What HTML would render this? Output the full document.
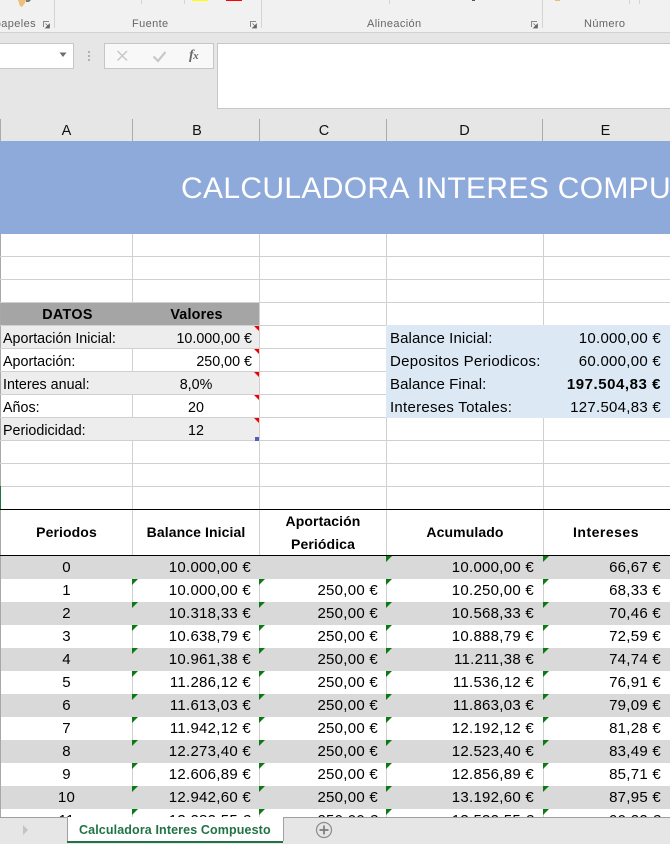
<!DOCTYPE html>
<html lang="es"><head><meta charset="utf-8"><title>Calculadora Interes Compuesto</title>
<style>
html,body{margin:0;padding:0;width:670px;height:844px;overflow:hidden;background:#fff}
body{position:relative;font-family:"Liberation Sans",sans-serif;color:#000}
.a{position:absolute}
.t{position:absolute;white-space:nowrap;font-size:15px;letter-spacing:.27px;line-height:23px;height:23px}
.r{text-align:right}
.c{text-align:center}
.lbl{position:absolute;top:17px;font-size:11px;letter-spacing:.38px;line-height:14px;color:#666;white-space:nowrap}
.sep{position:absolute;top:0;width:1px;background:#d4d4d4}
.col{position:absolute;top:119px;height:22px;width:1px;background:#ababab}
.hd{position:absolute;top:120px;height:22px;line-height:22px;font-size:14.5px;text-align:center;color:#111}
.gl{position:absolute;background:#d0d0d0}
.d{font-size:14.3px;letter-spacing:0;line-height:23px}
.g{position:absolute;width:0;height:0;border-top:6px solid #0a7a12;border-right:6px solid transparent}
.rd{position:absolute;width:0;height:0;border-top:5px solid #f00000;border-left:5px solid transparent}
.b{font-weight:700}
.hb{font-size:14px;letter-spacing:.1px}
</style></head><body>

<!-- ribbon -->
<div class="a" style="left:0;top:0;width:670px;height:32px;background:#f1f1f1"></div>
<div class="a" style="left:0;top:32px;width:670px;height:1px;background:#d2d2d2"></div>
<svg class="a" style="left:15px;top:0" width="20" height="8"><path d="M3 0h8l-1 3-3 4-2-1z" fill="#eebf7c"/><path d="M11 0h5l-2 2h-3z" fill="#777"/></svg>
<div class="sep" style="left:54px;height:28px"></div>
<div class="sep" style="left:141px;height:4px"></div>
<div class="sep" style="left:184px;height:4px"></div>
<div class="sep" style="left:261px;height:28px"></div>
<div class="sep" style="left:389px;height:4px"></div>
<div class="sep" style="left:542px;height:28px"></div>
<div class="sep" style="left:629px;height:4px"></div>
<div class="sep" style="left:639px;height:4px"></div>
<div class="a" style="left:192px;top:0;width:16px;height:1px;background:#ff0"></div>
<div class="a" style="left:226px;top:0;width:16px;height:1px;background:#f00"></div>
<div class="a" style="left:555px;top:0;width:5px;height:1px;background:#f0bc70"></div>
<div class="a" style="left:472px;top:0;width:3px;height:1px;background:#555"></div>
<div class="a" style="left:0;top:17px;width:36px;height:14px;overflow:hidden"><span class="lbl" style="top:0;left:auto;right:0">Portapapeles</span></div>
<div class="lbl" style="left:132px">Fuente</div>
<div class="lbl" style="left:367px">Alineación</div>
<div class="lbl" style="left:584px">Número</div>
<svg class="a" style="left:43px;top:21px" width="8" height="8"><path d="M.5 6V.5H6" fill="none" stroke="#888"/><path d="M2.5 2.5l3 3M6.5 3v4h-4z" fill="#666" stroke="#666" stroke-width=".7"/></svg>
<svg class="a" style="left:250px;top:21px" width="8" height="8"><path d="M.5 6V.5H6" fill="none" stroke="#888"/><path d="M2.5 2.5l3 3M6.5 3v4h-4z" fill="#666" stroke="#666" stroke-width=".7"/></svg>
<svg class="a" style="left:531px;top:21px" width="8" height="8"><path d="M.5 6V.5H6" fill="none" stroke="#888"/><path d="M2.5 2.5l3 3M6.5 3v4h-4z" fill="#666" stroke="#666" stroke-width=".7"/></svg>

<!-- formula bar -->
<div class="a" style="left:0;top:33px;width:670px;height:86px;background:#e6e6e6"></div>
<div class="a" style="left:-2px;top:43px;width:74px;height:24px;background:#fff;border:1px solid #c6c6c6"></div>
<svg class="a" style="left:59px;top:52px" width="10" height="6"><path d="M.5 .5h7L4 5z" fill="#6d6d6d"/></svg>
<div class="a" style="left:88px;top:51px;width:2px;height:2px;background:#b1b1b1"></div>
<div class="a" style="left:88px;top:55px;width:2px;height:2px;background:#b1b1b1"></div>
<div class="a" style="left:88px;top:59px;width:2px;height:2px;background:#b1b1b1"></div>
<div class="a" style="left:104px;top:43px;width:108px;height:24px;background:#f8f8f8;border:1px solid #c6c6c6"></div>
<svg class="a" style="left:116px;top:50px" width="14" height="12"><path d="M1.500 1l9.500 9.500M11 1L1.500 10.500" fill="none" stroke="#c8c8c8" stroke-width="1.500"/></svg>
<svg class="a" style="left:152px;top:50px" width="16" height="13"><path d="M1.500 6.500l4.500 4.500L13.500 2" fill="none" stroke="#c8c8c8" stroke-width="2.200"/></svg>
<div class="a" style="left:189px;top:47px;font:italic 700 14px/17px 'Liberation Serif',serif;color:#6a6a6a;letter-spacing:-.5px">f<span style="font-size:11px">x</span></div>
<div class="a" style="left:217px;top:43px;width:460px;height:64px;background:#fff;border:1px solid #c6c6c6"></div>

<!-- column headers -->
<div class="a" style="left:0;top:119px;width:670px;height:22px;background:#e6e6e6"></div>
<div class="col" style="left:0"></div><div class="col" style="left:132px"></div><div class="col" style="left:259px"></div><div class="col" style="left:386px"></div><div class="col" style="left:542px"></div>
<div class="hd" style="left:1px;width:131px">A</div>
<div class="hd" style="left:134px;width:126px">B</div>
<div class="hd" style="left:261px;width:126px">C</div>
<div class="hd" style="left:387px;width:155px">D</div>
<div class="hd" style="left:542px;width:127px">E</div>

<!-- title -->
<div class="a" style="left:0;top:141px;width:670px;height:93px;background:#8eaadb;overflow:hidden"><div class="a" style="left:181px;top:28px;color:#fff;font-size:30px;line-height:40px;letter-spacing:.33px;white-space:nowrap">CALCULADORA INTERES COMPUESTO</div></div>

<!-- gridlines -->
<div class="gl" style="left:0;top:234px;width:1px;height:322px;background:#a8a8a8"></div>
<div class="gl" style="left:132px;top:234px;width:1px;height:275px"></div>
<div class="gl" style="left:259px;top:234px;width:1px;height:275px"></div>
<div class="gl" style="left:386px;top:234px;width:1px;height:275px"></div>
<div class="gl" style="left:543px;top:234px;width:1px;height:275px"></div>
<div class="gl" style="left:0;top:256px;width:670px;height:1px"></div>
<div class="gl" style="left:0;top:279px;width:670px;height:1px"></div>
<div class="gl" style="left:0;top:302px;width:670px;height:1px"></div>
<div class="gl" style="left:259px;top:325px;width:411px;height:1px"></div>
<div class="gl" style="left:259px;top:348px;width:127px;height:1px"></div>
<div class="gl" style="left:259px;top:371px;width:127px;height:1px"></div>
<div class="gl" style="left:259px;top:394px;width:127px;height:1px"></div>
<div class="gl" style="left:0;top:417px;width:670px;height:1px"></div>
<div class="gl" style="left:0;top:440px;width:670px;height:1px"></div>
<div class="gl" style="left:0;top:463px;width:670px;height:1px"></div>
<div class="gl" style="left:0;top:486px;width:670px;height:1px"></div>
<div class="a" style="left:0;top:486px;width:1px;height:23px;background:#217346"></div>

<!-- datos -->
<div class="a" style="left:1px;top:303px;width:258px;height:23px;background:#a5a5a5"></div>
<div class="a" style="left:1px;top:326px;width:258px;height:22px;background:#ededed"></div>
<div class="a" style="left:1px;top:349px;width:258px;height:22px;background:#fff"></div>
<div class="a" style="left:1px;top:372px;width:258px;height:22px;background:#ededed"></div>
<div class="a" style="left:1px;top:395px;width:258px;height:22px;background:#fff"></div>
<div class="a" style="left:1px;top:418px;width:258px;height:22px;background:#ededed"></div>
<div class="gl" style="left:0;top:325px;width:259px;height:1px;background:#d0d0d0"></div>
<div class="gl" style="left:0;top:348px;width:259px;height:1px"></div>
<div class="gl" style="left:0;top:371px;width:259px;height:1px"></div>
<div class="gl" style="left:0;top:394px;width:259px;height:1px"></div>
<div class="gl" style="left:132px;top:349px;width:1px;height:22px"></div>
<div class="gl" style="left:132px;top:395px;width:1px;height:22px"></div>
<div class="t d b c" style="left:1px;top:304px;width:133px;letter-spacing:.35px">DATOS</div>
<div class="t d b c" style="left:133px;top:304px;width:127px;letter-spacing:.2px">Valores</div>
<div class="t d" style="left:3px;top:328px">Aportación Inicial:</div>
<div class="t d" style="left:3px;top:351px">Aportación:</div>
<div class="t d" style="left:3px;top:374px">Interes anual:</div>
<div class="t d" style="left:3px;top:397px">Años:</div>
<div class="t d" style="left:3px;top:420px">Periodicidad:</div>
<div class="t d r" style="left:133px;top:328px;width:119px">10.000,00 €</div>
<div class="t d r" style="left:133px;top:351px;width:119px">250,00 €</div>
<div class="t d c" style="left:133px;top:374px;width:126px">8,0%</div>
<div class="t d c" style="left:133px;top:397px;width:126px">20</div>
<div class="t d c" style="left:133px;top:420px;width:126px">12</div>
<div class="rd" style="left:254px;top:326px"></div>
<div class="rd" style="left:254px;top:349px"></div>
<div class="rd" style="left:254px;top:372px"></div>
<div class="rd" style="left:254px;top:395px"></div>
<div class="rd" style="left:254px;top:418px"></div>
<div class="a" style="left:255px;top:437px;width:4px;height:4px;background:#4f5fc0"></div>

<!-- resumen -->
<div class="a" style="left:386px;top:325px;width:284px;height:93px;background:#dce9f5"></div>
<div class="t" style="left:390px;top:327px;letter-spacing:.1px">Balance Inicial:</div>
<div class="t" style="left:390px;top:350px">Depositos Periodicos:</div>
<div class="t" style="left:390px;top:373px;letter-spacing:.1px">Balance Final:</div>
<div class="t" style="left:390px;top:396px">Intereses Totales:</div>
<div class="t r" style="left:543px;top:327px;width:118px">10.000,00 €</div>
<div class="t r" style="left:543px;top:350px;width:118px">60.000,00 €</div>
<div class="t r b" style="left:543px;top:373px;width:118px;letter-spacing:.55px">197.504,83 €</div>
<div class="t r" style="left:543px;top:396px;width:118px">127.504,83 €</div>

<!-- cabecera tabla -->
<div class="a" style="left:0;top:509px;width:670px;height:1px;background:#000"></div>
<div class="a" style="left:0;top:555px;width:670px;height:1px;background:#000"></div>
<div class="gl" style="left:132px;top:510px;width:1px;height:45px"></div>
<div class="gl" style="left:259px;top:510px;width:1px;height:45px"></div>
<div class="gl" style="left:386px;top:510px;width:1px;height:45px"></div>
<div class="gl" style="left:543px;top:510px;width:1px;height:45px"></div>
<div class="t hb b c" style="left:1px;top:521px;width:131px">Periodos</div>
<div class="t hb b c" style="left:133px;top:521px;width:126px">Balance Inicial</div>
<div class="t hb b c" style="left:260px;top:510px;width:126px">Aportación</div>
<div class="t hb b c" style="left:260px;top:533px;width:126px">Periódica</div>
<div class="t hb b c" style="left:387px;top:521px;width:156px">Acumulado</div>
<div class="t hb b c" style="left:543px;top:521px;width:126px;letter-spacing:.5px">Intereses</div>

<!-- bandas -->
<div class="a" style="left:1px;top:556px;width:669px;height:23px;background:#d9d9d9"></div>
<div class="a" style="left:1px;top:602px;width:669px;height:23px;background:#d9d9d9"></div>
<div class="a" style="left:1px;top:648px;width:669px;height:23px;background:#d9d9d9"></div>
<div class="a" style="left:1px;top:694px;width:669px;height:23px;background:#d9d9d9"></div>
<div class="a" style="left:1px;top:740px;width:669px;height:23px;background:#d9d9d9"></div>
<div class="a" style="left:1px;top:786px;width:669px;height:23px;background:#d9d9d9"></div>
<div class="a" style="left:0;top:556px;width:1px;height:261px;background:#a8a8a8"></div>
<!-- lineas verticales filas blancas -->
<div class="gl" style="left:132px;top:579px;width:1px;height:23px"></div><div class="gl" style="left:259px;top:579px;width:1px;height:23px"></div><div class="gl" style="left:386px;top:579px;width:1px;height:23px"></div><div class="gl" style="left:543px;top:579px;width:1px;height:23px"></div>
<div class="gl" style="left:132px;top:625px;width:1px;height:23px"></div><div class="gl" style="left:259px;top:625px;width:1px;height:23px"></div><div class="gl" style="left:386px;top:625px;width:1px;height:23px"></div><div class="gl" style="left:543px;top:625px;width:1px;height:23px"></div>
<div class="gl" style="left:132px;top:671px;width:1px;height:23px"></div><div class="gl" style="left:259px;top:671px;width:1px;height:23px"></div><div class="gl" style="left:386px;top:671px;width:1px;height:23px"></div><div class="gl" style="left:543px;top:671px;width:1px;height:23px"></div>
<div class="gl" style="left:132px;top:717px;width:1px;height:23px"></div><div class="gl" style="left:259px;top:717px;width:1px;height:23px"></div><div class="gl" style="left:386px;top:717px;width:1px;height:23px"></div><div class="gl" style="left:543px;top:717px;width:1px;height:23px"></div>
<div class="gl" style="left:132px;top:763px;width:1px;height:23px"></div><div class="gl" style="left:259px;top:763px;width:1px;height:23px"></div><div class="gl" style="left:386px;top:763px;width:1px;height:23px"></div><div class="gl" style="left:543px;top:763px;width:1px;height:23px"></div>
<div class="gl" style="left:132px;top:809px;width:1px;height:8px"></div><div class="gl" style="left:259px;top:809px;width:1px;height:8px"></div><div class="gl" style="left:386px;top:809px;width:1px;height:8px"></div><div class="gl" style="left:543px;top:809px;width:1px;height:8px"></div>

<!-- datos tabla -->
<div class="a" style="left:0;top:556px;width:670px;height:261px;overflow:hidden">
<div class="g" style="left:386px;top:0"></div><div class="g" style="left:543px;top:0"></div>
<div class="t c" style="left:1px;top:0;width:131px">0</div><div class="t r" style="left:133px;top:0;width:118px">10.000,00 €</div><div class="t r" style="left:387px;top:0;width:147px">10.000,00 €</div><div class="t r" style="left:544px;top:0;width:117px">66,67 €</div>

<div class="g" style="left:132px;top:23px"></div><div class="g" style="left:259px;top:23px"></div><div class="g" style="left:386px;top:23px"></div><div class="g" style="left:543px;top:23px"></div>
<div class="t c" style="left:1px;top:23px;width:131px">1</div><div class="t r" style="left:133px;top:23px;width:118px">10.000,00 €</div><div class="t r" style="left:260px;top:23px;width:118px">250,00 €</div><div class="t r" style="left:387px;top:23px;width:147px">10.250,00 €</div><div class="t r" style="left:544px;top:23px;width:117px">68,33 €</div>

<div class="g" style="left:132px;top:46px"></div><div class="g" style="left:259px;top:46px"></div><div class="g" style="left:386px;top:46px"></div><div class="g" style="left:543px;top:46px"></div>
<div class="t c" style="left:1px;top:46px;width:131px">2</div><div class="t r" style="left:133px;top:46px;width:118px">10.318,33 €</div><div class="t r" style="left:260px;top:46px;width:118px">250,00 €</div><div class="t r" style="left:387px;top:46px;width:147px">10.568,33 €</div><div class="t r" style="left:544px;top:46px;width:117px">70,46 €</div>

<div class="g" style="left:132px;top:69px"></div><div class="g" style="left:259px;top:69px"></div><div class="g" style="left:386px;top:69px"></div><div class="g" style="left:543px;top:69px"></div>
<div class="t c" style="left:1px;top:69px;width:131px">3</div><div class="t r" style="left:133px;top:69px;width:118px">10.638,79 €</div><div class="t r" style="left:260px;top:69px;width:118px">250,00 €</div><div class="t r" style="left:387px;top:69px;width:147px">10.888,79 €</div><div class="t r" style="left:544px;top:69px;width:117px">72,59 €</div>

<div class="g" style="left:132px;top:92px"></div><div class="g" style="left:259px;top:92px"></div><div class="g" style="left:386px;top:92px"></div><div class="g" style="left:543px;top:92px"></div>
<div class="t c" style="left:1px;top:92px;width:131px">4</div><div class="t r" style="left:133px;top:92px;width:118px">10.961,38 €</div><div class="t r" style="left:260px;top:92px;width:118px">250,00 €</div><div class="t r" style="left:387px;top:92px;width:147px">11.211,38 €</div><div class="t r" style="left:544px;top:92px;width:117px">74,74 €</div>

<div class="g" style="left:132px;top:115px"></div><div class="g" style="left:259px;top:115px"></div><div class="g" style="left:386px;top:115px"></div><div class="g" style="left:543px;top:115px"></div>
<div class="t c" style="left:1px;top:115px;width:131px">5</div><div class="t r" style="left:133px;top:115px;width:118px">11.286,12 €</div><div class="t r" style="left:260px;top:115px;width:118px">250,00 €</div><div class="t r" style="left:387px;top:115px;width:147px">11.536,12 €</div><div class="t r" style="left:544px;top:115px;width:117px">76,91 €</div>

<div class="g" style="left:132px;top:138px"></div><div class="g" style="left:259px;top:138px"></div><div class="g" style="left:386px;top:138px"></div><div class="g" style="left:543px;top:138px"></div>
<div class="t c" style="left:1px;top:138px;width:131px">6</div><div class="t r" style="left:133px;top:138px;width:118px">11.613,03 €</div><div class="t r" style="left:260px;top:138px;width:118px">250,00 €</div><div class="t r" style="left:387px;top:138px;width:147px">11.863,03 €</div><div class="t r" style="left:544px;top:138px;width:117px">79,09 €</div>

<div class="g" style="left:132px;top:161px"></div><div class="g" style="left:259px;top:161px"></div><div class="g" style="left:386px;top:161px"></div><div class="g" style="left:543px;top:161px"></div>
<div class="t c" style="left:1px;top:161px;width:131px">7</div><div class="t r" style="left:133px;top:161px;width:118px">11.942,12 €</div><div class="t r" style="left:260px;top:161px;width:118px">250,00 €</div><div class="t r" style="left:387px;top:161px;width:147px">12.192,12 €</div><div class="t r" style="left:544px;top:161px;width:117px">81,28 €</div>

<div class="g" style="left:132px;top:184px"></div><div class="g" style="left:259px;top:184px"></div><div class="g" style="left:386px;top:184px"></div><div class="g" style="left:543px;top:184px"></div>
<div class="t c" style="left:1px;top:184px;width:131px">8</div><div class="t r" style="left:133px;top:184px;width:118px">12.273,40 €</div><div class="t r" style="left:260px;top:184px;width:118px">250,00 €</div><div class="t r" style="left:387px;top:184px;width:147px">12.523,40 €</div><div class="t r" style="left:544px;top:184px;width:117px">83,49 €</div>

<div class="g" style="left:132px;top:207px"></div><div class="g" style="left:259px;top:207px"></div><div class="g" style="left:386px;top:207px"></div><div class="g" style="left:543px;top:207px"></div>
<div class="t c" style="left:1px;top:207px;width:131px">9</div><div class="t r" style="left:133px;top:207px;width:118px">12.606,89 €</div><div class="t r" style="left:260px;top:207px;width:118px">250,00 €</div><div class="t r" style="left:387px;top:207px;width:147px">12.856,89 €</div><div class="t r" style="left:544px;top:207px;width:117px">85,71 €</div>

<div class="g" style="left:132px;top:230px"></div><div class="g" style="left:259px;top:230px"></div><div class="g" style="left:386px;top:230px"></div><div class="g" style="left:543px;top:230px"></div>
<div class="t c" style="left:1px;top:230px;width:131px">10</div><div class="t r" style="left:133px;top:230px;width:118px">12.942,60 €</div><div class="t r" style="left:260px;top:230px;width:118px">250,00 €</div><div class="t r" style="left:387px;top:230px;width:147px">13.192,60 €</div><div class="t r" style="left:544px;top:230px;width:117px">87,95 €</div>

<div class="g" style="left:132px;top:253px"></div><div class="g" style="left:259px;top:253px"></div><div class="g" style="left:386px;top:253px"></div><div class="g" style="left:543px;top:253px"></div>
<div class="t c" style="left:1px;top:253px;width:131px">11</div><div class="t r" style="left:133px;top:253px;width:118px">13.282,55 €</div><div class="t r" style="left:260px;top:253px;width:118px">250,00 €</div><div class="t r" style="left:387px;top:253px;width:147px">13.532,55 €</div><div class="t r" style="left:544px;top:253px;width:117px">90,22 €</div>
</div>

<!-- pestañas -->
<div class="a" style="left:0;top:817px;width:670px;height:27px;background:#e6e6e6"></div>
<div class="a" style="left:0;top:817px;width:67px;height:1px;background:#a0a0a0"></div>
<div class="a" style="left:283px;top:817px;width:387px;height:1px;background:#a0a0a0"></div>
<div class="a" style="left:67px;top:817px;width:215px;height:24px;background:#fff;border-left:1px solid #a0a0a0;border-right:1px solid #a0a0a0"></div>
<div class="a" style="left:67px;top:841px;width:216px;height:2px;background:#217346"></div>
<div class="a" style="left:79px;top:818px;font-size:12.5px;font-weight:700;line-height:24px;color:#217346;white-space:nowrap;letter-spacing:.12px">Calculadora Interes Compuesto</div>
<svg class="a" style="left:21px;top:824px" width="8" height="12"><path d="M2 1l5 5-5 5z" fill="#c4c4c4"/></svg>
<svg class="a" style="left:315px;top:821px" width="18" height="18"><circle cx="9" cy="9" r="7.500" fill="none" stroke="#8c8c8c" stroke-width="1.200"/><path d="M9 4.500v9M4.500 9h9" stroke="#7a7a7a" stroke-width="1.700"/></svg>
</body></html>
